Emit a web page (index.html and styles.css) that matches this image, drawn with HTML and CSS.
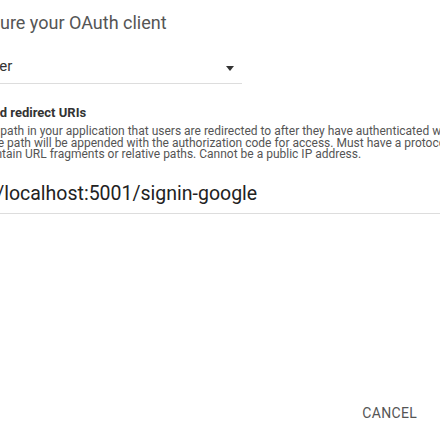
FILE: index.html
```html
<!DOCTYPE html>
<html>
<head>
<meta charset="utf-8">
<link rel="stylesheet" href="styles.css">
</head>
<body>
<div class="dialog">
  <h2 class="title"><span class="clip-title">Configure your OAuth client</span></h2>
  <div class="select">
    <span class="select-value"><span class="clip-select">Web server</span></span>
    <span class="arrow"></span>
  </div>
  <div class="label"><span class="clip-label">Authorized redirect URIs</span></div>
  <div class="desc">
    <div class="desc-line l1">For use with requests from a web server. This is the path in your application that users are redirected to after they have authenticated with Google.</div>
    <div class="desc-line l2">The path will be appended with the authorization code for access. Must have a protocol.</div>
    <div class="desc-line l3">Cannot contain URL fragments or relative paths. Cannot be a public IP address.</div>
  </div>
  <div class="uri"><span class="clip-uri">https://localhost:5001/signin-google</span></div>
  <div class="actions">
    <button class="btn">Cancel</button>
  </div>
</div>
</body>
</html>
```
FILE: styles.css
```css
html, body {
  margin: 0;
  padding: 0;
  background: #fff;
  overflow: hidden;
  width: 440px;
  height: 437px;
}
.dialog {
  width: 440px;
  height: 437px;
  overflow: hidden;
  font-family: Roboto, "Liberation Sans", sans-serif;
  display: flex;
  flex-direction: column;
}
.title {
  margin: 0;
  padding-top: 11px;
  font-size: 18px;
  font-weight: 400;
  line-height: 24px;
  color: #555;
  white-space: nowrap;
}
.clip-title { margin-left: -52px; }
.select {
  margin-top: 22px;
  width: 242px;
  height: 26px;
  border-bottom: 1px solid #ddd;
  display: flex;
  align-items: flex-start;
  justify-content: space-between;
  white-space: nowrap;
  overflow: hidden;
}
.select-value {
  font-size: 15px;
  line-height: 18px;
  color: #333;
}
.clip-select { margin-left: -62px; }
.arrow {
  margin-top: 9px;
  margin-right: 8px;
  width: 0;
  height: 0;
  border-left: 4.5px solid transparent;
  border-right: 4.5px solid transparent;
  border-top: 5px solid #333;
}
.label {
  margin-top: 21px;
  font-size: 13px;
  font-weight: 700;
  line-height: 16px;
  color: #333;
  white-space: nowrap;
}
.clip-label { margin-left: -57px; }
.desc {
  margin-top: 5px;
  font-size: 12px;
  line-height: 11.5px;
  color: #555;
  white-space: nowrap;
}
.desc-line.l1 { margin-left: -276px; }
.desc-line.l2 { margin-left: -16px; }
.desc-line.l3 { margin-left: -59px; }
.uri {
  margin-top: 19px;
  height: 31px;
  padding-top: 2px;
  border-bottom: 1px solid #ddd;
  font-size: 19.5px;
  line-height: 24px;
  color: #222;
  white-space: nowrap;
}
.clip-uri { margin-left: -59px; }
.actions {
  margin-top: auto;
  margin-bottom: 14px;
  display: flex;
  justify-content: flex-end;
  padding-right: 17px;
}
.btn {
  border: none;
  background: none;
  font-family: Roboto, "Liberation Sans", sans-serif;
  font-size: 14px;
  letter-spacing: 0.3px;
  text-transform: uppercase;
  color: #555;
  padding: 0 6px;
  line-height: 20px;
}
```
